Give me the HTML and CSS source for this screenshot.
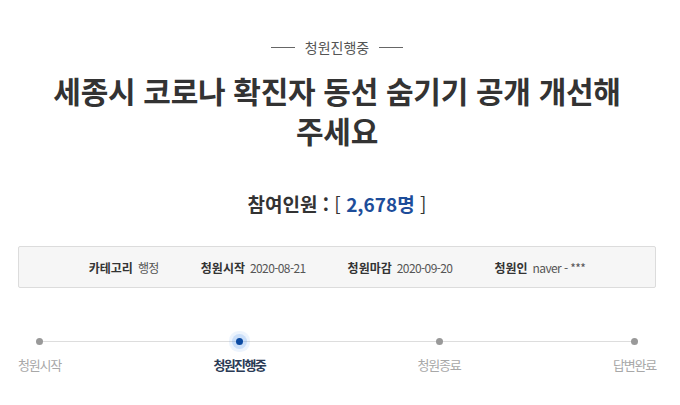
FILE: index.html
```html
<!DOCTYPE html>
<html lang="ko">
<head>
<meta charset="utf-8">
<link rel="stylesheet" href="styles.css">
</head>
<body>
<div class="page">
  <div class="status"><span class="rule"></span><span class="status-text">청원진행중</span><span class="rule"></span></div>
  <h1 class="title">세종시 코로나 확진자 동선 숨기기 공개 개선해<br>주세요</h1>
  <div class="count">참여인원 : <span class="br">[</span> <span class="num">2,678명</span> <span class="br">]</span></div>
  <div class="info">
    <div class="item"><span class="label">카테고리</span><span class="val">행정</span></div>
    <div class="item"><span class="label">청원시작</span><span class="val">2020-08-21</span></div>
    <div class="item"><span class="label">청원마감</span><span class="val">2020-09-20</span></div>
    <div class="item"><span class="label">청원인</span><span class="val">naver - ***</span></div>
  </div>
  <div class="steps">
    <div class="line"></div>
    <div class="step"><span class="dot"></span><span class="step-label">청원시작</span></div>
    <div class="step active"><span class="dot"></span><span class="step-label">청원진행중</span></div>
    <div class="step"><span class="dot"></span><span class="step-label">청원종료</span></div>
    <div class="step"><span class="dot"></span><span class="step-label">답변완료</span></div>
  </div>
</div>
</body>
</html>
```
FILE: styles.css
```css
html, body { margin: 0; padding: 0; background: #fff; }
body { font-family: "Noto Sans CJK KR", "Noto Sans", sans-serif; color: #333; }
.page { padding: 36px 24px 0 18px; }
.status { display: flex; justify-content: center; align-items: center; gap: 10px; height: 22px; }
.rule { width: 24px; height: 1px; background: #666; }
.status-text { font-size: 14px; color: #555; line-height: 22px; }
.title { margin: 12px 0 0; text-align: center; font-size: 30px; font-weight: 700; line-height: 40px; color: #333; letter-spacing: -0.3px; }
.count { margin-top: 41px; text-align: center; font-size: 19px; font-weight: 700; line-height: 26px; color: #333; }
.count .br { font-weight: 400; }
.count .num { color: #1d4d9a; }
.info { margin-top: 29px; height: 40px; border: 1px solid #dcdcdc; border-radius: 2px; background: #f6f6f6; display: flex; justify-content: center; align-items: center; gap: 42px; font-size: 12px; padding-left: 0; }
.item { display: flex; gap: 5px; align-items: center; }
.label { font-weight: 700; color: #333; }
.val { color: #555; letter-spacing: -0.6px; }
.steps { position: relative; margin-top: 44px; display: flex; justify-content: space-between; }
.line { position: absolute; left: 20px; right: 20px; top: 9px; height: 1px; background: #ddd; }
.step { position: relative; display: flex; flex-direction: column; align-items: center; gap: 11px; }
.dot { width: 7px; height: 7px; border-radius: 50%; background: #999; margin-top: 6px; }
.step.active .dot { background: #0b4aa2; box-shadow: 0 0 0 4px rgba(80,150,235,0.22), 0 0 0 7px rgba(80,150,235,0.10); }
.step-label { font-size: 13px; color: #a8a8a8; line-height: 18px; letter-spacing: -1.2px; }
.step.active .step-label { color: #2a3a55; font-weight: 700; letter-spacing: -1.6px; }
```
